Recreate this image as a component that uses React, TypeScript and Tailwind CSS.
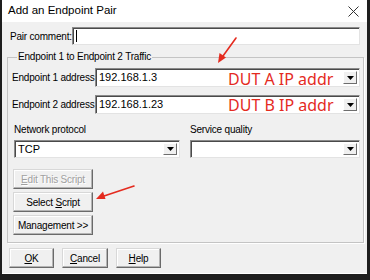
const font = { fontFamily: '"Liberation Sans", Arial, sans-serif' };

function DropArrow() {
  return (
    <div className="w-[14px] h-full flex items-center justify-center bg-[#f0f0f0] border border-t-white border-l-white border-r-[#6d6d6d] border-b-[#6d6d6d]">
      <svg width="7" height="4" viewBox="0 0 7 4">
        <path d="M0 0h7L3.5 4z" fill="#000" />
      </svg>
    </div>
  );
}

function Combo({ value, className }: { value?: string; className: string }) {
  return (
    <div
      className={`flex items-center bg-white border border-t-[#8a8a8a] border-l-[#8a8a8a] border-r-[#e3e3e3] border-b-[#e3e3e3] shadow-[inset_1px_1px_0_#4a4a4a] p-[2px] ${className}`}
    >
      <span className="flex-1 pl-[1px] text-[11px] leading-none text-black">{value}</span>
      <DropArrow />
    </div>
  );
}

function Btn({
  children,
  className = "",
  disabled = false,
}: {
  children: React.ReactNode;
  className?: string;
  disabled?: boolean;
}) {
  return (
    <div
      className={`flex items-center justify-center bg-[#f0f0f0] border border-t-[#d8d8d8] border-l-[#d8d8d8] border-r-[#6a6a6a] border-b-[#6a6a6a] shadow-[inset_-1px_-1px_0_#b4b4b4,inset_1px_1px_0_#ffffff] text-[10px] tracking-[-0.2px] whitespace-nowrap ${
        disabled ? "text-[#a0a0a0] [text-shadow:1px_1px_0_#fff]" : "text-black"
      } ${className}`}
    >
      <span>{children}</span>
    </div>
  );
}

export default function App() {
  return (
    <div className="relative w-[370px] h-[280px] bg-[#1e1e1e] pl-[2px] pr-[3px] pb-[6px]" style={font}>
      <div className="h-full bg-[#f0f0f0] flex flex-col border-b border-white">
        <div className="h-[22px] bg-white flex items-center justify-between pl-[6px] pr-[8px]">
          <span className="text-[11.5px] text-black">Add an Endpoint Pair</span>
          <svg width="11" height="11" viewBox="0 0 11 11">
            <path d="M0.5 0.5l10 10M10.5 0.5l-10 10" stroke="#333" strokeWidth="1" />
          </svg>
        </div>

        <div className="mt-[5px] flex items-center h-[18px]">
          <span className="ml-[8px] w-[62px] text-[10px] tracking-[-0.2px] text-black whitespace-nowrap">Pair comment:</span>
          <div className="w-[288px] h-full bg-white border border-t-[#8a8a8a] border-l-[#8a8a8a] border-r-[#e3e3e3] border-b-[#e3e3e3] shadow-[inset_1px_1px_0_#4a4a4a] flex items-center pl-[3px]">
            <div className="w-[1px] h-[12px] bg-black" />
          </div>
        </div>

        <fieldset className="mt-[6px] ml-[5px] mr-[3px] border border-[#c4c4c4] shadow-[1px_1px_0_#fff] pl-[4px] pr-[3px] pb-[7px]">
          <legend className="ml-[5px] px-[1px] text-[10px] tracking-[-0.2px] leading-[12px] text-black">
            Endpoint 1 to Endpoint 2 Traffic
          </legend>

          <div className="mt-[5px] flex items-center">
            <span className="w-[83px] text-[10px] tracking-[-0.2px] text-black whitespace-nowrap">Endpoint 1 address</span>
            <Combo value="192.168.1.3" className="flex-1 h-[19px]" />
          </div>
          <div className="mt-[8px] flex items-center">
            <span className="w-[83px] text-[10px] tracking-[-0.2px] text-black whitespace-nowrap">Endpoint 2 address</span>
            <Combo value="192.168.1.23" className="flex-1 h-[19px]" />
          </div>

          <div className="mt-[10px] flex">
            <div className="w-[166px] ml-[2px] flex flex-col">
              <span className="text-[10px] tracking-[-0.2px] leading-[12px] text-black">Network protocol</span>
              <Combo value="TCP" className="mt-[4px] h-[18px]" />
            </div>
            <div className="ml-[10px] flex-1 flex flex-col">
              <span className="text-[10px] tracking-[-0.2px] leading-[12px] text-black">Service quality</span>
              <Combo className="mt-[4px] h-[18px]" />
            </div>
          </div>

          <div className="mt-[11px] ml-[1px] w-[80px] flex flex-col gap-[3px]">
            <Btn disabled className="h-[20px]">
              <span className="underline">E</span>dit This Script
            </Btn>
            <Btn className="h-[20px]">
              Select <span className="underline">S</span>cript
            </Btn>
            <Btn className="h-[20px]">Management &gt;&gt;</Btn>
          </div>
        </fieldset>

        <div className="mt-[5px] ml-[7px] flex gap-[8px]">
          <Btn className="w-[45px] h-[20px]">
            <span className="underline">O</span>K
          </Btn>
          <Btn className="w-[46px] h-[20px]">
            <span className="underline">C</span>ancel
          </Btn>
          <Btn className="w-[45px] h-[20px]">
            <span className="underline">H</span>elp
          </Btn>
        </div>
      </div>

      <span
        className="absolute left-[228px] top-[70px] text-[16px] leading-[18px] text-[#e42b1f]"
        style={{ fontFamily: '"Noto Sans", "Liberation Sans", sans-serif' }}
      >
        DUT A IP addr
      </span>
      <span
        className="absolute left-[228px] top-[96px] text-[16px] leading-[18px] text-[#e42b1f]"
        style={{ fontFamily: '"Noto Sans", "Liberation Sans", sans-serif' }}
      >
        DUT B IP addr
      </span>

      <svg className="absolute left-0 top-0 pointer-events-none" width="370" height="280">
        <g stroke="#e42b1f" fill="#e42b1f" strokeWidth="1.6" strokeLinecap="round">
          <line x1="236" y1="38" x2="223" y2="56" />
          <path d="M218 63l1.5-10 6.5 4.5z" stroke="none" />
          <line x1="134" y1="186" x2="104" y2="196" />
          <path d="M96 199l7-7.5 2.5 7.5z" stroke="none" />
        </g>
      </svg>
    </div>
  );
}
